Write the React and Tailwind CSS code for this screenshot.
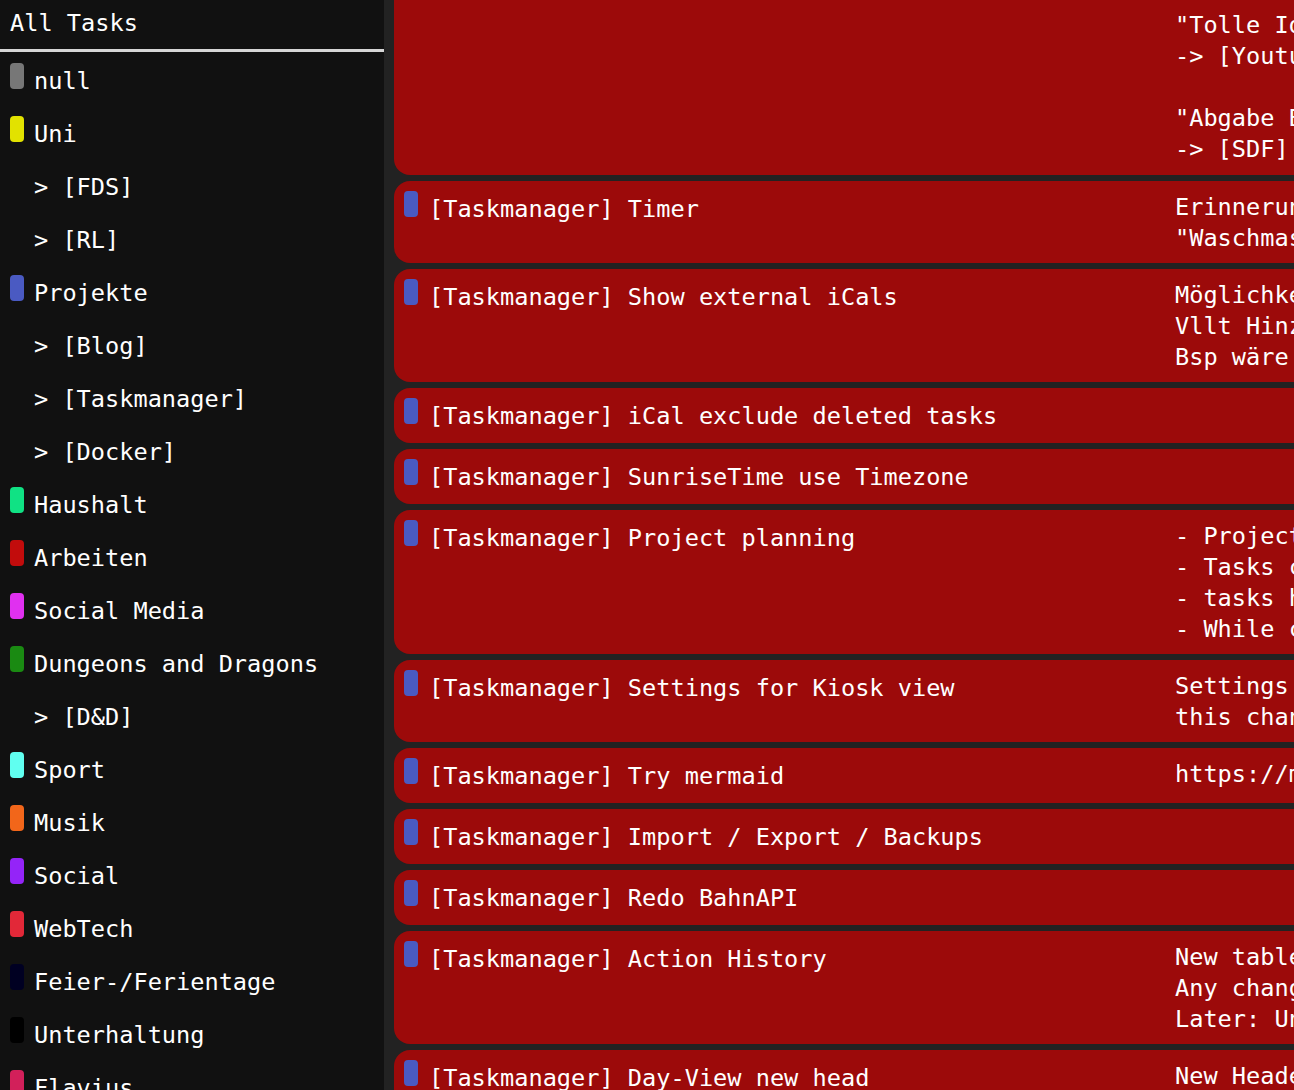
const categories = [
  { name: "null", color: "#777777" },
  { name: "Uni", color: "#e2e200" },
  { name: "[FDS]", sub: true },
  { name: "[RL]", sub: true },
  { name: "Projekte", color: "#4a5ac2" },
  { name: "[Blog]", sub: true },
  { name: "[Taskmanager]", sub: true },
  { name: "[Docker]", sub: true },
  { name: "Haushalt", color: "#10e284" },
  { name: "Arbeiten", color: "#c20c0c" },
  { name: "Social Media", color: "#e030f0" },
  { name: "Dungeons and Dragons", color: "#1a8a12" },
  { name: "[D&D]", sub: true },
  { name: "Sport", color: "#60fff0" },
  { name: "Musik", color: "#f2661a" },
  { name: "Social", color: "#9424f8" },
  { name: "WebTech", color: "#e22838" },
  { name: "Feier-/Ferientage", color: "#000022" },
  { name: "Unterhaltung", color: "#000000" },
  { name: "Flavius", color: "#d2205a" }
];

const tasks = [
  { title: "[Taskmanager] Timer", desc: ["Erinnerung nach Ablauf", "\"Waschmaschine fertig\""] },
  { title: "[Taskmanager] Show external iCals", desc: ["Möglichkeit externe iCals anzuzeigen", "Vllt Hinzufügen als Projekt", "Bsp wäre Uni Stundenplan"] },
  { title: "[Taskmanager] iCal exclude deleted tasks", desc: [] },
  { title: "[Taskmanager] SunriseTime use Timezone", desc: [] },
  { title: "[Taskmanager] Project planning", desc: ["- Projects with subtasks", "- Tasks can depend on others", "- tasks have estimated time", "- While creating show timeline"] },
  { title: "[Taskmanager] Settings for Kiosk view", desc: ["Settings page for kiosk", "this changes the layout"] },
  { title: "[Taskmanager] Try mermaid", desc: ["https://mermaid.js.org"] },
  { title: "[Taskmanager] Import / Export / Backups", desc: [] },
  { title: "[Taskmanager] Redo BahnAPI", desc: [] },
  { title: "[Taskmanager] Action History", desc: ["New table for actions", "Any change gets logged", "Later: Undo button"] },
  { title: "[Taskmanager] Day-View new head", desc: ["New Header for day view"] }
];

function TaskCard({ task }) {
  return (
    <div className="flex rounded-2xl bg-[#9c0a0a] pt-[11px] pb-[9px] pl-[10px]">
      <div className="flex w-[771px] shrink-0 gap-[11px]">
        <div className="-mt-px h-[26px] w-[14px] shrink-0 rounded-[4px] bg-[#4a5ac2]"></div>
        <div className="leading-[35px]">{task.title}</div>
      </div>
      <div className="leading-[31px] whitespace-pre">
        {task.desc.map((line, i) => (
          <div key={i}>{line}</div>
        ))}
      </div>
    </div>
  );
}

export default function App() {
  return (
    <div
      className="flex h-screen w-full overflow-hidden bg-[#222222] text-white text-[23.6px]"
      style={{ fontFamily: '"DejaVu Sans Mono", "Liberation Mono", monospace' }}
    >
      {/* SIDEBAR */}
      <aside className="w-[384px] shrink-0 bg-[#111111]">
        <div className="h-[52px] border-b-[3px] border-[#d6d6d6] pl-[10px] leading-[46px]">
          All Tasks
        </div>
        {categories.map((c) =>
          c.sub ? (
            <div key={c.name} className="flex h-[53px] pl-[34px] pt-[11px] leading-[36px]">
              {"> " + c.name}
            </div>
          ) : (
            <div key={c.name} className="flex h-[53px] items-start gap-[10px] pl-[10px] pt-[11px]">
              <div className="h-[26px] w-[14px] shrink-0 rounded-[4px]" style={{ background: c.color }}></div>
              <div className="leading-[36px]">{c.name}</div>
            </div>
          )
        )}
      </aside>

      {/* MAIN */}
      <main className="flex-1 overflow-hidden pl-[10px]">
        <div className="flex w-[1600px] flex-col gap-[6px]">
          {/* first card, scrolled past its title */}
          <div className="flex rounded-b-2xl bg-[#9c0a0a] pb-[10px] pl-[10px] pt-[10px]">
            <div className="w-[771px] shrink-0"></div>
            <div className="leading-[31px] whitespace-pre">
              <div>"Tolle Idee für Video"</div>
              <div>-&gt; [Youtube]</div>
              <div>&nbsp;</div>
              <div>"Abgabe Bericht"</div>
              <div>-&gt; [SDF]</div>
            </div>
          </div>
          {tasks.map((t) => (
            <TaskCard key={t.title} task={t} />
          ))}
        </div>
      </main>
    </div>
  );
}
